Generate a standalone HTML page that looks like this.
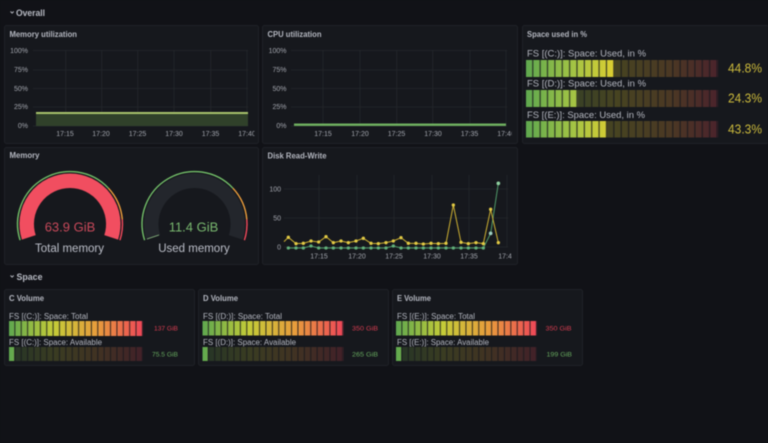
<!DOCTYPE html>
<html><head><meta charset="utf-8"><style>
html,body{margin:0;padding:0;background:#111217;width:768px;height:443px;overflow:hidden}
svg{display:block;filter:blur(.5px)}
text{font-family:"Liberation Sans",sans-serif}
.p{fill:#16181d;stroke:#1f2127;stroke-width:1}
.t{font-size:8px;font-weight:bold;fill:#b4b7c0}
.h{font-size:9.5px;font-weight:bold;fill:#b8bbc4}
.a{font-size:7px;fill:#a3a6ae}
.g{stroke:#24272c;stroke-width:.8;fill:none}
.l{font-size:8px;fill:#b4b7c0}
.L{font-size:9.5px;fill:#bfc1ca}
.v{font-size:13px;fill:#cdbb3c}
.s{font-size:6.5px}
</style></head><body>
<svg width="768" height="443" viewBox="0 0 768 443" xmlns="http://www.w3.org/2000/svg">
<defs>
<linearGradient id="gs"><stop offset="0" stop-color="#5fa84f"/><stop offset=".25" stop-color="#a4c444"/><stop offset=".47" stop-color="#e0cf30"/><stop offset=".75" stop-color="#f0a03a"/><stop offset="1" stop-color="#f2495c"/></linearGradient>
<linearGradient id="gv"><stop offset="0" stop-color="#5fa84f"/><stop offset=".33" stop-color="#c4cc38"/><stop offset=".66" stop-color="#e89c3c"/><stop offset="1" stop-color="#ee4658"/></linearGradient>
<pattern id="ps" patternUnits="userSpaceOnUse" x="526" y="0" width="7.37" height="10"><rect x="6.17" width="1.2" height="10" fill="#16181d" opacity=".8"/></pattern>
<pattern id="pc" patternUnits="userSpaceOnUse" x="9" y="0" width="6.38" height="10"><rect x="5.28" width="1.1" height="10" fill="#16181d" opacity=".8"/></pattern>
<pattern id="pd" patternUnits="userSpaceOnUse" x="202.5" y="0" width="6.4" height="10"><rect x="5.3" width="1.1" height="10" fill="#16181d" opacity=".8"/></pattern>
<pattern id="pe" patternUnits="userSpaceOnUse" x="396" y="0" width="6.41" height="10"><rect x="5.31" width="1.1" height="10" fill="#16181d" opacity=".8"/></pattern>
<clipPath id="c1"><rect x="0" y="120" width="254.5" height="24"/></clipPath>
<clipPath id="c2"><rect x="262" y="120" width="249.6" height="24"/></clipPath>
<clipPath id="c3"><rect x="262" y="240" width="249.5" height="24"/></clipPath>
</defs>
<rect width="768" height="443" fill="#111217"/>

<path d="M10.5 11.5l1.6 1.6 1.6-1.6" fill="none" stroke="#bfc1ca" stroke-width=".9"/>
<text class="h" x="16" y="16" textLength="29" lengthAdjust="spacingAndGlyphs">Overall</text>
<path d="M10.5 275.5l1.6 1.6 1.6-1.6" fill="none" stroke="#bfc1ca" stroke-width=".9"/>
<text class="h" x="16.5" y="280" textLength="26" lengthAdjust="spacingAndGlyphs">Space</text>

<!-- panels -->
<rect class="p" x="4.5" y="25.5" width="254" height="118" rx="2"/>
<rect class="p" x="262.5" y="25.5" width="255" height="118" rx="2"/>
<rect class="p" x="522.5" y="25.5" width="246" height="118" rx="2"/>
<rect class="p" x="4.5" y="147.5" width="254" height="117" rx="2"/>
<rect class="p" x="262.5" y="147.5" width="255" height="117" rx="2"/>
<rect class="p" x="4.5" y="289.5" width="190" height="76" rx="2"/>
<rect class="p" x="198.5" y="289.5" width="190" height="76" rx="2"/>
<rect class="p" x="392.5" y="289.5" width="190" height="76" rx="2"/>

<!-- Memory utilization -->
<text class="t" x="9.5" y="37" textLength="67.5" lengthAdjust="spacingAndGlyphs">Memory utilization</text>
<path class="g" d="M33 50.5H248M33 70H248M33 88.5H248M33 107H248M33 126H248M65.7 50V126M101.7 50V126M137.7 50V126M174 50V126M210.7 50V126M247 50V126"/>
<rect x="36" y="113" width="212" height="13" fill="#30412a"/>
<rect x="36" y="112" width="212" height="2" fill="#a8c46c"/>
<g class="a" text-anchor="end">
<text x="28" y="53">100%</text><text x="28" y="72">75%</text><text x="28" y="91">50%</text><text x="28" y="109">25%</text><text x="28" y="128">0%</text>
</g>
<g class="a" text-anchor="middle" clip-path="url(#c1)">
<text x="65" y="136">17:15</text><text x="101" y="136">17:20</text><text x="137.5" y="136">17:25</text><text x="174" y="136">17:30</text><text x="210.5" y="136">17:35</text><text x="247" y="136">17:40</text>
</g>

<!-- CPU utilization -->
<text class="t" x="267.5" y="37" textLength="54" lengthAdjust="spacingAndGlyphs">CPU utilization</text>
<path class="g" d="M291 50.5H507M291 70H507M291 88.5H507M291 107H507M291 126H507M323 50V126M360 50V126M396.7 50V126M432.7 50V126M470 50V126M506 50V126"/>
<rect x="294" y="123.5" width="212" height="2.4" fill="#6fb060"/>
<g class="a" text-anchor="end">
<text x="286.5" y="53">100%</text><text x="286.5" y="72">75%</text><text x="286.5" y="91">50%</text><text x="286.5" y="109">25%</text><text x="286.5" y="128">0%</text>
</g>
<g class="a" text-anchor="middle" clip-path="url(#c2)">
<text x="323" y="136">17:15</text><text x="360" y="136">17:20</text><text x="396.5" y="136">17:25</text><text x="433" y="136">17:30</text><text x="469.5" y="136">17:35</text><text x="506" y="136">17:40</text>
</g>

<!-- Space used -->
<text class="t" x="527" y="37" textLength="60" lengthAdjust="spacingAndGlyphs">Space used in %</text>
<text class="l" x="527" y="56.5" textLength="119" lengthAdjust="spacingAndGlyphs" style="font-size:9px">FS [(C:)]: Space: Used, in %</text>
<text class="l" x="527" y="86.5" textLength="119" lengthAdjust="spacingAndGlyphs" style="font-size:9px">FS [(D:)]: Space: Used, in %</text>
<text class="l" x="527" y="118" textLength="118" lengthAdjust="spacingAndGlyphs" style="font-size:9px">FS [(E:)]: Space: Used, in %</text>
<rect x="526" y="60" width="192" height="17" fill="url(#gs)"/><rect x="614.4" y="60" width="104" height="17" fill="#16181d" opacity=".76"/><rect x="526" y="60" width="192" height="17" fill="url(#ps)"/>
<rect x="526" y="90" width="192" height="17" fill="url(#gs)"/><rect x="577.6" y="90" width="141" height="17" fill="#16181d" opacity=".76"/><rect x="526" y="90" width="192" height="17" fill="url(#ps)"/>
<rect x="526" y="121" width="192" height="16.5" fill="url(#gs)"/><rect x="607" y="121" width="111.5" height="16.5" fill="#16181d" opacity=".76"/><rect x="526" y="121" width="192" height="16.5" fill="url(#ps)"/>
<text class="v" x="728" y="72.5" textLength="34" lengthAdjust="spacingAndGlyphs">44.8%</text>
<text class="v" x="728" y="102.5" textLength="34" lengthAdjust="spacingAndGlyphs">24.3%</text>
<text class="v" x="728" y="133.5" textLength="34" lengthAdjust="spacingAndGlyphs">43.3%</text>

<!-- Memory gauges -->
<text class="t" x="9.5" y="158" textLength="30" lengthAdjust="spacingAndGlyphs">Memory</text>
<path d="M28.8 237.4A43.3 43.3 0 1 1 111.2 237.4" fill="none" stroke="#f14e60" stroke-width="14.5"/>
<g fill="none" stroke-width="1.4">
<path d="M20.1 240.2A52.5 52.5 0 0 1 108.4 188.2" stroke="#73bf69"/>
<path d="M108.4 188.2A52.5 52.5 0 0 1 122.3 219.4" stroke="#f0a03c"/>
<path d="M122.3 219.4A52.5 52.5 0 0 1 119.9 240.2" stroke="#f2495c"/>
</g>
<text x="70" y="231.5" text-anchor="middle" style="font-size:13px;fill:#c8495a">63.9 GiB</text>
<text x="69.5" y="252" text-anchor="middle" class="L" style="font-size:11.5px;fill:#bcbfc9">Total memory</text>

<path d="M153.3 237.4A43.3 43.3 0 1 1 235.7 237.4" fill="none" stroke="#23262c" stroke-width="14.5"/>
<path d="M147 239L159 235" fill="none" stroke="#8fbf86" stroke-width=".8"/>
<g fill="none" stroke-width="1.4">
<path d="M144.6 240.2A52.5 52.5 0 0 1 232.9 188.2" stroke="#73bf69"/>
<path d="M232.9 188.2A52.5 52.5 0 0 1 246.8 219.4" stroke="#f0a03c"/>
<path d="M246.8 219.4A52.5 52.5 0 0 1 244.4 240.2" stroke="#f2495c"/>
</g>
<text x="193.5" y="231.5" text-anchor="middle" style="font-size:13px;fill:#79b86f">11.4 GiB</text>
<text x="194" y="252" text-anchor="middle" class="L" style="font-size:11.5px;fill:#bcbfc9">Used memory</text>

<!-- Disk -->
<text class="t" x="267.5" y="158.5" textLength="59" lengthAdjust="spacingAndGlyphs">Disk Read-Write</text>
<path class="g" d="M284 189H508M284 218H508M284 247H508M319 175V247M357 175V247M394 175V247M432 175V247M469 175V247M507 175V247"/>
<g class="a" text-anchor="end">
<text x="281" y="191.5">100</text><text x="281" y="220.5">50</text><text x="281" y="249.5">0</text>
</g>
<g class="a" text-anchor="middle" clip-path="url(#c3)">
<text x="319" y="258.5">17:15</text><text x="357" y="258.5">17:20</text><text x="394" y="258.5">17:25</text><text x="432" y="258.5">17:30</text><text x="469" y="258.5">17:35</text><text x="507" y="258.5">17:40</text>
</g>
<g transform="translate(260 145) scale(.33333)">
<polyline fill="none" stroke="#4f9a6a" stroke-width="3" points="85,309 108,309 130,309 153,303 176,309 198,309 220,309 243,309 265,309 288,309 310,309 333,309 355,309 378,309 400,303 423,309 445,309 468,309 490,309 513,309 535,309 558,309 580,309 603,309 625,309 648,309 670,309 692,265 715,115"/>
<g fill="#62b07a" stroke="#62b07a" stroke-width="3"><circle cx="85" cy="309" r="3.5"/><circle cx="108" cy="309" r="3.5"/><circle cx="130" cy="309" r="3.5"/><circle cx="153" cy="303" r="3.5"/><circle cx="176" cy="309" r="3.5"/><circle cx="198" cy="309" r="3.5"/><circle cx="220" cy="309" r="3.5"/><circle cx="243" cy="309" r="3.5"/><circle cx="265" cy="309" r="3.5"/><circle cx="288" cy="309" r="3.5"/><circle cx="310" cy="309" r="3.5"/><circle cx="333" cy="309" r="3.5"/><circle cx="355" cy="309" r="3.5"/><circle cx="378" cy="309" r="3.5"/><circle cx="400" cy="303" r="3.5"/><circle cx="423" cy="309" r="3.5"/><circle cx="445" cy="309" r="3.5"/><circle cx="468" cy="309" r="3.5"/><circle cx="490" cy="309" r="3.5"/><circle cx="513" cy="309" r="3.5"/><circle cx="535" cy="309" r="3.5"/><circle cx="558" cy="309" r="3.5"/><circle cx="580" cy="309" r="3.5"/><circle cx="603" cy="309" r="3.5"/><circle cx="625" cy="309" r="3.5"/><circle cx="648" cy="309" r="3.5"/><circle cx="670" cy="309" r="3.5"/><circle cx="692" cy="265" r="4" fill="#9fd0c0" stroke="#9fd0c0"/><circle cx="715" cy="115" r="4" fill="#8fd0a0" stroke="#8fd0a0"/></g>
<polyline fill="none" stroke="#cdb032" stroke-width="3" points="72,290 85,277 108,296 130,295 153,288 176,291 198,275 220,293 243,288 265,293 288,288 310,280 333,295 355,296 378,293 400,288 423,278 445,295 468,295 490,297 513,295 535,296 558,295 580,180 603,292 625,296 648,293 670,296 692,193 715,293"/>
<g fill="#e3cb45" stroke="#e3cb45" stroke-width="3"><circle cx="85" cy="277" r="3.5"/><circle cx="108" cy="296" r="3.5"/><circle cx="130" cy="295" r="3.5"/><circle cx="153" cy="288" r="3.5"/><circle cx="176" cy="291" r="3.5"/><circle cx="198" cy="275" r="3.5"/><circle cx="220" cy="293" r="3.5"/><circle cx="243" cy="288" r="3.5"/><circle cx="265" cy="293" r="3.5"/><circle cx="288" cy="288" r="3.5"/><circle cx="310" cy="280" r="3.5"/><circle cx="333" cy="295" r="3.5"/><circle cx="355" cy="296" r="3.5"/><circle cx="378" cy="293" r="3.5"/><circle cx="400" cy="288" r="3.5"/><circle cx="423" cy="278" r="3.5"/><circle cx="445" cy="295" r="3.5"/><circle cx="468" cy="295" r="3.5"/><circle cx="490" cy="297" r="3.5"/><circle cx="513" cy="295" r="3.5"/><circle cx="535" cy="296" r="3.5"/><circle cx="558" cy="295" r="3.5"/><circle cx="580" cy="180" r="3.5"/><circle cx="603" cy="292" r="3.5"/><circle cx="625" cy="296" r="3.5"/><circle cx="648" cy="293" r="3.5"/><circle cx="670" cy="296" r="3.5"/><circle cx="692" cy="193" r="3.5"/><circle cx="715" cy="293" r="3.5"/></g>
</g>

<!-- C Volume -->
<text class="t" x="9" y="301" textLength="35" lengthAdjust="spacingAndGlyphs">C Volume</text>
<text class="l" x="9" y="319" textLength="79" lengthAdjust="spacingAndGlyphs">FS [(C:)]: Space: Total</text>
<text class="l" x="9" y="345" textLength="93" lengthAdjust="spacingAndGlyphs">FS [(C:)]: Space: Available</text>
<rect x="9" y="321" width="134" height="15" fill="url(#gv)"/><rect x="9" y="321" width="134" height="15" fill="url(#pc)"/>
<rect x="9" y="347" width="134" height="14" fill="url(#gv)"/><rect x="14.3" y="347" width="129" height="14" fill="#16181d" opacity=".8"/><rect x="9" y="347" width="134" height="14" fill="url(#pc)"/>
<text class="s" x="154" y="330.5" textLength="24" lengthAdjust="spacingAndGlyphs" fill="#d63c50">137 GiB</text>
<text class="s" x="152" y="356.5" textLength="26" lengthAdjust="spacingAndGlyphs" fill="#66a85e">75.5 GiB</text>

<!-- D Volume -->
<text class="t" x="203" y="301" textLength="35" lengthAdjust="spacingAndGlyphs">D Volume</text>
<text class="l" x="203" y="319" textLength="79" lengthAdjust="spacingAndGlyphs">FS [(D:)]: Space: Total</text>
<text class="l" x="203" y="345" textLength="93" lengthAdjust="spacingAndGlyphs">FS [(D:)]: Space: Available</text>
<rect x="202.5" y="321" width="140.8" height="14.5" fill="url(#gv)"/><rect x="202.5" y="321" width="140.8" height="14.5" fill="url(#pd)"/>
<rect x="202.5" y="347" width="140.8" height="14" fill="url(#gv)"/><rect x="207.8" y="347" width="135.5" height="14" fill="#16181d" opacity=".8"/><rect x="202.5" y="347" width="140.8" height="14" fill="url(#pd)"/>
<text class="s" x="352" y="330.5" textLength="26" lengthAdjust="spacingAndGlyphs" fill="#d63c50">350 GiB</text>
<text class="s" x="352" y="356.5" textLength="26" lengthAdjust="spacingAndGlyphs" fill="#66a85e">265 GiB</text>

<!-- E Volume -->
<text class="t" x="397" y="301" textLength="34" lengthAdjust="spacingAndGlyphs">E Volume</text>
<text class="l" x="397" y="319" textLength="78" lengthAdjust="spacingAndGlyphs">FS [(E:)]: Space: Total</text>
<text class="l" x="397" y="345" textLength="92" lengthAdjust="spacingAndGlyphs">FS [(E:)]: Space: Available</text>
<rect x="396" y="321" width="141" height="14.5" fill="url(#gv)"/><rect x="396" y="321" width="141" height="14.5" fill="url(#pe)"/>
<rect x="396" y="347" width="141" height="14" fill="url(#gv)"/><rect x="401.3" y="347" width="135.7" height="14" fill="#16181d" opacity=".8"/><rect x="396" y="347" width="141" height="14" fill="url(#pe)"/>
<text class="s" x="545.5" y="330.5" textLength="26" lengthAdjust="spacingAndGlyphs" fill="#d63c50">350 GiB</text>
<text class="s" x="546.5" y="356.5" textLength="25.5" lengthAdjust="spacingAndGlyphs" fill="#66a85e">199 GiB</text>
</svg>
</body></html>
